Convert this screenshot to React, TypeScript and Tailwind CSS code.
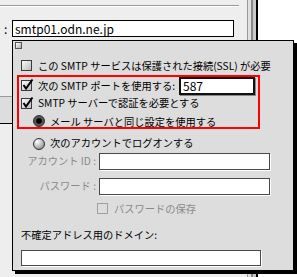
import React from 'react';

const font = { fontFamily: '"Noto Sans CJK JP", "Noto Sans", sans-serif' };

function Checkbox({ checked = false, disabled = false }: { checked?: boolean; disabled?: boolean }) {
  return (
    <svg width="13" height="12" viewBox="0 0 13 12" className="shrink-0 overflow-visible">
      <defs>
        <linearGradient id="cbg" x1="0" y1="0" x2="1" y2="1">
          <stop offset="0" stopColor="#ffffff" />
          <stop offset="1" stopColor="#b8b8b8" />
        </linearGradient>
      </defs>
      <rect
        x="0.5"
        y="0.5"
        width="10"
        height="10"
        fill={disabled ? '#dddddd' : 'url(#cbg)'}
        stroke={disabled ? '#a0a0a0' : '#3a3a3a'}
      />
      {checked && (
        <path d="M2.5 5 L5 8.5 L11.5 -0.5" fill="none" stroke="#000" strokeWidth="2" strokeLinejoin="miter" />
      )}
    </svg>
  );
}

function Radio({ selected = false }: { selected?: boolean }) {
  return (
    <svg width="12" height="12" viewBox="0 0 12 12" className="shrink-0">
      <defs>
        <radialGradient id="rg" cx="0.35" cy="0.3" r="0.75">
          <stop offset="0" stopColor="#ffffff" />
          <stop offset="1" stopColor="#8e8e8e" />
        </radialGradient>
      </defs>
      <circle cx="6" cy="6" r="5.5" fill={selected ? '#555' : 'url(#rg)'} stroke="#333" />
      {selected && <circle cx="6" cy="6" r="2.8" fill="#000" />}
    </svg>
  );
}

function Field({ className = '', children }: { className?: string; children?: React.ReactNode }) {
  return (
    <div className={`bg-white border border-[#4a4a4a] shadow-[1px_1px_0_#ffffff] ${className}`}>{children}</div>
  );
}

export default function App() {
  return (
    <div className="relative w-[297px] h-[277px] overflow-hidden bg-[#eeeeee] text-[10.25px] text-black whitespace-nowrap" style={font}>
      {/* Window behind */}
      <div className="flex h-full">
        <div className="w-[247px] flex flex-col">
          <div className="h-[5px]" />
          <div className="h-px w-[239px] bg-[#9a9a9a]" />
          <div className="h-px w-[239px] bg-white" />
          <div className="h-[13px]" />
          <div className="flex h-[17px] items-center">
            <div className="w-[12px] pl-[4px] leading-none text-[12px]">:</div>
            <div className="w-[222px] h-[17px] bg-white border border-black flex items-center pl-[2px] text-[12px] leading-none">
              smtp01.odn.ne.jp
            </div>
          </div>
          <div className="h-[59px]" />
          <div className="h-px w-[12px] bg-[#9a9a9a]" />
          <div className="h-[26px] w-[12px] bg-[#dddddd]" />
          <div className="h-px w-[12px] bg-black" />
          <div className="flex-1 w-[12px] bg-[#eeeeee]" />
        </div>
        <div className="w-px bg-[#999999]" />
        <div className="w-[3px] bg-[#e0e0e0]" />
        <div className="w-[2px] bg-[#888888]" />
        <div className="w-[3px] bg-[#c8c8c8]" />
        <div className="w-[2px] bg-black" />
        <div className="flex-1 bg-white" />
      </div>

      {/* Popup panel */}
      <div className="absolute left-[12px] top-[40px] w-[282px] h-[231px] border border-black bg-[#dddddd] shadow-[3px_3px_0_#000]">
        <div className="flex flex-col">
          <div className="h-[16px] pl-[2px] pt-[1px]">
            <div className="w-[7px] h-[7px] border border-[#555] bg-gradient-to-br from-white to-[#aaaaaa]" />
          </div>

          <div className="h-[18px] pl-[8px] flex items-center gap-[4px]">
            <Checkbox />
            <span className="leading-none">この SMTP サービスは保護された接続(SSL) が必要</span>
          </div>

          <div className="ml-[4px] w-[243px] h-[54px] border-2 border-[#ff0000] flex flex-col">
            <div className="h-[18px] pl-[2px] flex items-center gap-[4px]">
              <Checkbox checked />
              <span className="leading-none">次の SMTP ポートを使用する:</span>
              <div className="ml-auto mr-[3px] w-[76px] h-[18px] bg-white border-2 border-[#111] shadow-[1px_1px_0_#888] flex items-center pl-[2px] text-[12px] leading-none">
                587
              </div>
            </div>
            <div className="h-[17px] pl-[2px] flex items-center gap-[4px]">
              <Checkbox checked />
              <span className="leading-none">SMTP サーバーで認証を必要とする</span>
            </div>
            <div className="h-[15px] pl-[14px] flex items-end gap-[5px]">
              <Radio selected />
              <span className="leading-none">メール サーバと同じ設定を使用する</span>
            </div>
          </div>

          <div className="mt-[5px] h-[19px] pl-[20px] flex items-center gap-[5px]">
            <Radio />
            <span className="leading-none">次のアカウントでログオンする</span>
          </div>

          <div className="h-[17px] flex items-center">
            <div className="w-[86px] pr-[3px] text-right text-[#8a8a8a] leading-none">アカウント ID :</div>
            <Field className="w-[171px] h-[17px]" />
          </div>

          <div className="mt-[8px] h-[17px] flex items-center">
            <div className="w-[86px] pr-[3px] text-right text-[#8a8a8a] leading-none">パスワード :</div>
            <Field className="w-[171px] h-[17px]" />
          </div>

          <div className="mt-[5px] h-[18px] pl-[84px] flex items-center gap-[4px]">
            <Checkbox disabled />
            <span className="leading-none text-[#8a8a8a]">パスワードの保存</span>
          </div>

          <div className="mt-[8px] h-[18px] pl-[8px] flex items-center">
            <span className="leading-none">不確定アドレス用のドメイン:</span>
          </div>

          <Field className="mt-[6px] ml-[8px] w-[240px] h-[16px]" />
        </div>
      </div>
    </div>
  );
}
